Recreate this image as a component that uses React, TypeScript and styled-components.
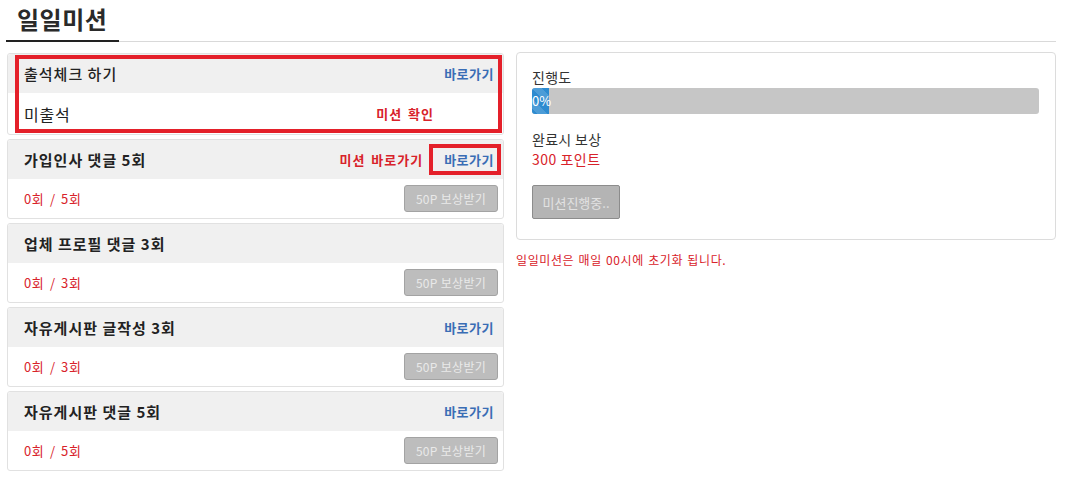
import React from "react";
import styled, { createGlobalStyle } from "styled-components";

const GlobalStyle = createGlobalStyle`
  html, body { margin: 0; padding: 0; background: #fff; }
  body { font-family: "Noto Sans CJK KR", "Noto Sans", sans-serif; color: #222; }
  * { box-sizing: border-box; }
`;

const Page = styled.div`
  width: 1074px;
  padding-left: 6px;
`;

const Header = styled.div`
  width: 1050px;
  height: 42px;
  border-bottom: 1px solid #d9d9d9;
  display: flex;
  align-items: flex-end;
`;

const Title = styled.h1`
  margin: 0 0 -1px 0;
  padding: 0 12px 3px 11px;
  font-size: 24px;
  line-height: 36px;
  font-weight: 700;
  letter-spacing: 0.5px;
  color: #2a2a2a;
  border-bottom: 2px solid #222;
`;

const Content = styled.div`
  display: grid;
  grid-template-columns: 498px 540px;
  column-gap: 12px;
  margin-top: 11px;
  align-items: start;
`;

const Column = styled.div`
  display: flex;
  flex-direction: column;
  gap: 4px;
  padding-left: 1px;
`;

const Card = styled.div`
  position: relative;
  border: 1px solid #e1e1e1;
  border-radius: 3px;
  background: #fff;
`;

const CardHead = styled.div`
  height: 39px;
  background: #f0f0f0;
  display: flex;
  align-items: center;
  justify-content: space-between;
  padding: 0 9px 0 16px;
  border-radius: 3px 3px 0 0;
`;

const CardTitle = styled.span<{ $plain?: boolean }>`
  font-size: 15px;
  font-weight: ${(p) => (p.$plain ? 500 : 700)};
  letter-spacing: 1px;
  color: #222;
  line-height: 20px;
`;

const HeadLinks = styled.div`
  display: flex;
  align-items: center;
  gap: 21px;
`;

const LinkText = styled.span<{ $red?: boolean }>`
  font-size: 13px;
  font-weight: 700;
  line-height: 18px;
  letter-spacing: ${(p) => (p.$red ? "1px" : "0.5px")};
  word-spacing: 2px;
  color: ${(p) => (p.$red ? "#d8222a" : "#3a6db5")};
`;

const CardBody = styled.div<{ $tall?: boolean }>`
  height: ${(p) => (p.$tall ? "41px" : "39px")};
  display: flex;
  align-items: center;
  justify-content: space-between;
  padding: 0 5px 0 16px;
`;

const Status = styled.span`
  font-size: 16px;
  color: #222;
  letter-spacing: 0.8px;
  line-height: 20px;
`;

const CheckLink = styled(LinkText)`
  margin-right: 64px;
`;

const Count = styled.span`
  font-size: 13px;
  color: #d8222a;
  letter-spacing: 0.6px;
  word-spacing: 2px;
  line-height: 18px;
`;

const RewardButton = styled.button`
  width: 94px;
  height: 27px;
  background: #bdbdbd;
  border: 1px solid #a3a3a3;
  border-radius: 3px;
  color: #e9e9e9;
  font-family: inherit;
  font-size: 12px;
  letter-spacing: 0.3px;
  padding: 0;
`;

const Annotation = styled.div<{ $top: number; $left: number; $w: number; $h: number }>`
  position: absolute;
  top: ${(p) => p.$top}px;
  left: ${(p) => p.$left}px;
  width: ${(p) => p.$w}px;
  height: ${(p) => p.$h}px;
  border: 4px solid #e4202a;
  pointer-events: none;
`;

const Side = styled.div`
  display: flex;
  flex-direction: column;
  margin-top: -1px;
`;

const Panel = styled.div`
  border: 1px solid #dcdcdc;
  border-radius: 4px;
  padding: 14px 16px 20px 15px;
  display: flex;
  flex-direction: column;
`;

const Label = styled.div<{ $gap?: number }>`
  font-size: 14px;
  line-height: 20px;
  color: #333;
  letter-spacing: 0.3px;
  margin-top: ${(p) => p.$gap ?? 0}px;
`;

const Points = styled.div`
  font-size: 14px;
  line-height: 20px;
  letter-spacing: 0.5px;
  color: #d8222a;
`;

const Progress = styled.div`
  margin-top: 1px;
  height: 26px;
  background: #c6c6c6;
  border-radius: 3px;
  overflow: hidden;
  display: flex;
`;

const ProgressFill = styled.div`
  height: 100%;
  background-color: #2d8bd0;
  background-image: linear-gradient(
    45deg,
    rgba(255, 255, 255, 0.15) 25%,
    transparent 25%,
    transparent 50%,
    rgba(255, 255, 255, 0.15) 50%,
    rgba(255, 255, 255, 0.15) 75%,
    transparent 75%,
    transparent
  );
  background-size: 20px 20px;
  color: #fff;
  font-size: 13px;
  line-height: 26px;
  white-space: nowrap;
`;

const StateButton = styled.button`
  margin-top: 16px;
  width: 88px;
  height: 34px;
  background: #b4b4b4;
  border: 1px solid #8c8c8c;
  border-radius: 2px;
  color: #e2e2e2;
  font-family: inherit;
  font-size: 13px;
  padding: 0;
`;

const Notice = styled.div`
  margin-top: 12px;
  font-size: 12px;
  line-height: 16px;
  letter-spacing: 0.6px;
  word-spacing: 1px;
  color: #d8222a;
`;

type Mission = { title: string; done: number; total: number; link: boolean; extra?: boolean };

const missions: Mission[] = [
  { title: "가입인사 댓글 5회", done: 0, total: 5, link: true, extra: true },
  { title: "업체 프로필 댓글 3회", done: 0, total: 3, link: false },
  { title: "자유게시판 글작성 3회", done: 0, total: 3, link: true },
  { title: "자유게시판 댓글 5회", done: 0, total: 5, link: true },
];

export default function App() {
  const percent = 0;
  return (
    <Page>
      <GlobalStyle />
      <Header>
        <Title>일일미션</Title>
      </Header>
      <Content>
        <Column>
          <Card>
            <CardHead>
              <CardTitle $plain>출석체크 하기</CardTitle>
              <LinkText>바로가기</LinkText>
            </CardHead>
            <CardBody $tall>
              <Status>미출석</Status>
              <CheckLink $red>미션 확인</CheckLink>
            </CardBody>
            <Annotation $top={1} $left={7} $w={487} $h={78} />
          </Card>
          {missions.map((m, i) => (
            <Card key={i}>
              <CardHead>
                <CardTitle>{m.title}</CardTitle>
                <HeadLinks>
                  {m.extra && <LinkText $red>미션 바로가기</LinkText>}
                  {m.link && <LinkText>바로가기</LinkText>}
                </HeadLinks>
              </CardHead>
              <CardBody>
                <Count>
                  {m.done}회 / {m.total}회
                </Count>
                <RewardButton>50P 보상받기</RewardButton>
              </CardBody>
              {m.extra && <Annotation $top={4} $left={421} $w={72} $h={31} />}
            </Card>
          ))}
        </Column>
        <Side>
          <Panel>
            <Label>진행도</Label>
            <Progress>
              <ProgressFill style={{ width: `${Math.max(percent, 3.4)}%` }}>{percent}%</ProgressFill>
            </Progress>
            <Label $gap={15}>완료시 보상</Label>
            <Points>300 포인트</Points>
            <div>
              <StateButton>미션진행중..</StateButton>
            </div>
          </Panel>
          <Notice>일일미션은 매일 00시에 초기화 됩니다.</Notice>
        </Side>
      </Content>
    </Page>
  );
}
